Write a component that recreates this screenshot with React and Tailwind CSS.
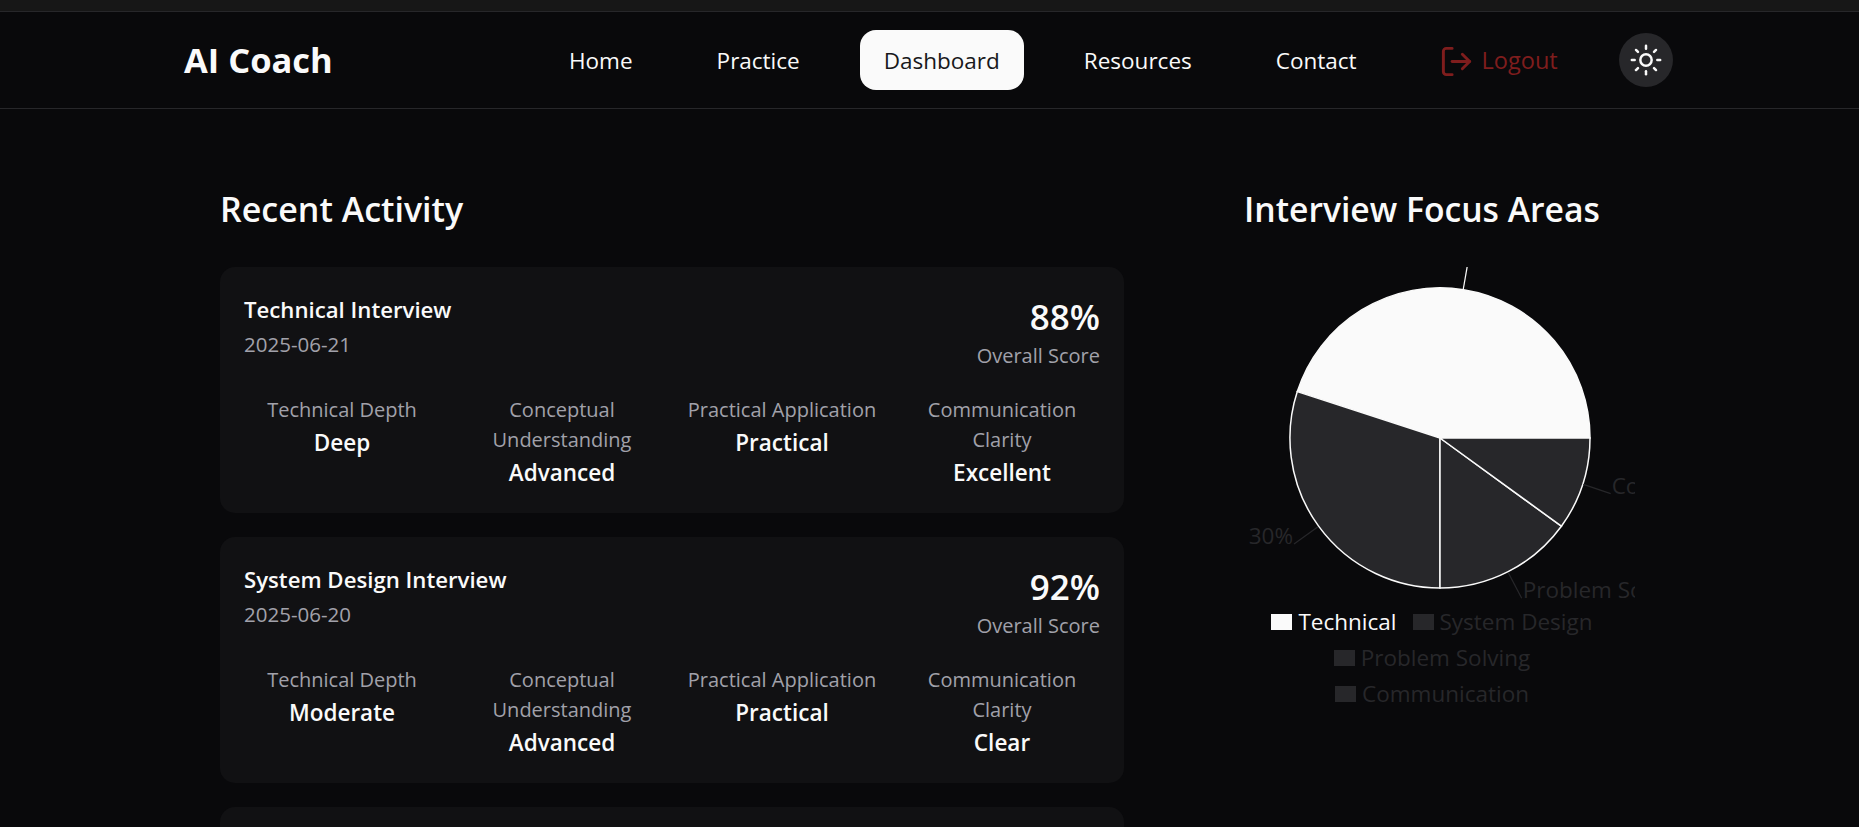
import { LogOut, Sun } from "lucide-react";

const navLinks = ["Home", "Practice", "Dashboard", "Resources", "Contact"];

const activities = [
  {
    title: "Technical Interview",
    date: "2025-06-21",
    score: "88%",
    depth: "Deep",
    understanding: "Advanced",
    application: "Practical",
    clarity: "Excellent",
  },
  {
    title: "System Design Interview",
    date: "2025-06-20",
    score: "92%",
    depth: "Moderate",
    understanding: "Advanced",
    application: "Practical",
    clarity: "Clear",
  },
];

// center 196,171 inside the svg, radius 150
const slices = [
  { d: "M196 171 L346 171 A150 150 0 0 0 53.3 124.6 Z", fill: "#fafafa" },
  { d: "M196 171 L53.3 124.6 A150 150 0 0 0 196 321 Z", fill: "#27272a" },
  { d: "M196 171 L196 321 A150 150 0 0 0 317.4 259.2 Z", fill: "#27272a" },
  { d: "M196 171 L317.4 259.2 A150 150 0 0 0 346 171 Z", fill: "#27272a" },
];

function Metric({ label, value }) {
  return (
    <div className="text-center">
      <p className="text-[20px] leading-[30px] text-[#a1a1aa]">{label}</p>
      <p className="text-[22.5px] leading-[36px] font-semibold text-[#fafafa]">{value}</p>
    </div>
  );
}

function ActivityCard({ item }) {
  return (
    <div className="h-[246px] rounded-[15px] bg-[#111113] px-6 pt-[29px]">
      <div className="flex items-start justify-between">
        <div>
          <h3 className="text-[22.2px] leading-[28px] font-semibold text-[#fafafa]">{item.title}</h3>
          <p className="mt-[6px] text-[20.5px] leading-[28px] text-[#a1a1aa]">{item.date}</p>
        </div>
        <div className="mt-[1px] text-right">
          <p className="text-[35px] leading-[40px] font-semibold text-[#fafafa]">{item.score}</p>
          <p className="mt-[5px] text-[20px] leading-[28px] text-[#a1a1aa]">Overall Score</p>
        </div>
      </div>
      <div className="mt-[25px] grid grid-cols-4 gap-6">
        <Metric label="Technical Depth" value={item.depth} />
        <Metric label="Conceptual Understanding" value={item.understanding} />
        <Metric label="Practical Application" value={item.application} />
        <Metric label="Communication Clarity" value={item.clarity} />
      </div>
    </div>
  );
}

function LegendItem({ label, fill, color }) {
  return (
    <span className="inline-flex items-center gap-[6px]" style={{ color }}>
      <span className="h-4 w-[21px]" style={{ backgroundColor: fill }} />
      {label}
    </span>
  );
}

function FocusChart() {
  return (
    <div>
      <svg width="391" height="337" viewBox="0 0 391 337" className="block overflow-hidden">
        {slices.map((s, i) => (
          <path key={i} d={s.d} fill={s.fill} stroke="#fafafa" strokeWidth="1.5" />
        ))}
        <path d="M219.3 22 L223.3 -1" stroke="#fafafa" strokeWidth="1.25" fill="none" />
        <path d="M74 259.7 L50 277" stroke="#27272a" strokeWidth="1.25" fill="none" />
        <path d="M264.3 305.7 L277.7 331.3" stroke="#27272a" strokeWidth="1.25" fill="none" />
        <path d="M339.3 217.3 L366.7 226.7" stroke="#27272a" strokeWidth="1.25" fill="none" />
        <text x="49" y="277" textAnchor="end" fontSize="22.5" fill="#27272a">30%</text>
        <text x="278.7" y="331" fontSize="22.5" fill="#27272a">Problem Solving</text>
        <text x="367.7" y="227" fontSize="22.5" fill="#27272a">Communication</text>
      </svg>
      <div className="flex flex-col items-center pr-[15px] text-[22.5px] leading-[36px]">
        <div className="flex gap-[16px]">
          <LegendItem label="Technical" fill="#fafafa" color="#fafafa" />
          <LegendItem label="System Design" fill="#27272a" color="#27272a" />
        </div>
        <LegendItem label="Problem Solving" fill="#27272a" color="#27272a" />
        <LegendItem label="Communication" fill="#27272a" color="#27272a" />
      </div>
    </div>
  );
}

export default function App() {
  return (
    <div className="h-screen overflow-hidden bg-[#09090b] font-['Open_Sans',sans-serif] text-[#fafafa]">
      <div className="h-[11px] bg-[#171717]" />
      <header className="flex h-[98px] items-center border-y border-[#27272a] pl-[184px]">
        <span className="w-[361px] text-[34.5px] font-bold">AI Coach</span>
        <nav className="flex items-center gap-[36px] text-[22.5px]">
          {navLinks.map((link) => (
            <a
              key={link}
              className={
                link === "Dashboard"
                  ? "flex h-[60px] items-center rounded-[16px] bg-[#fafafa] px-[24px] pt-[2px] text-[#18181b]"
                  : "flex h-[60px] items-center px-[24px] pt-[2px]"
              }
            >
              {link}
            </a>
          ))}
        </nav>
        <button className="ml-[33px] flex items-center gap-[8px] px-[25px] pt-[2px] text-[23.5px] text-[#7f1d1d]">
          <LogOut size={35} strokeWidth={2} />
          Logout
        </button>
        <button className="ml-[36px] flex h-[54px] w-[54px] items-center justify-center rounded-full bg-[#27272a]">
          <Sun size={34} strokeWidth={1.75} />
        </button>
      </header>
      <main className="flex gap-[120px] pl-[220px] pt-[75px]">
        <section className="w-[904px]">
          <h2 className="text-[34px] leading-[50px] font-semibold">Recent Activity</h2>
          <div className="mt-[33px] flex flex-col gap-6">
            {activities.map((item) => (
              <ActivityCard key={item.title} item={item} />
            ))}
            <div className="h-[246px] rounded-[15px] bg-[#111113]" />
          </div>
        </section>
        <section className="w-[391px]">
          <h2 className="text-[33.7px] leading-[50px] font-semibold">Interview Focus Areas</h2>
          <div className="mt-[33px]">
            <FocusChart />
          </div>
        </section>
      </main>
    </div>
  );
}
